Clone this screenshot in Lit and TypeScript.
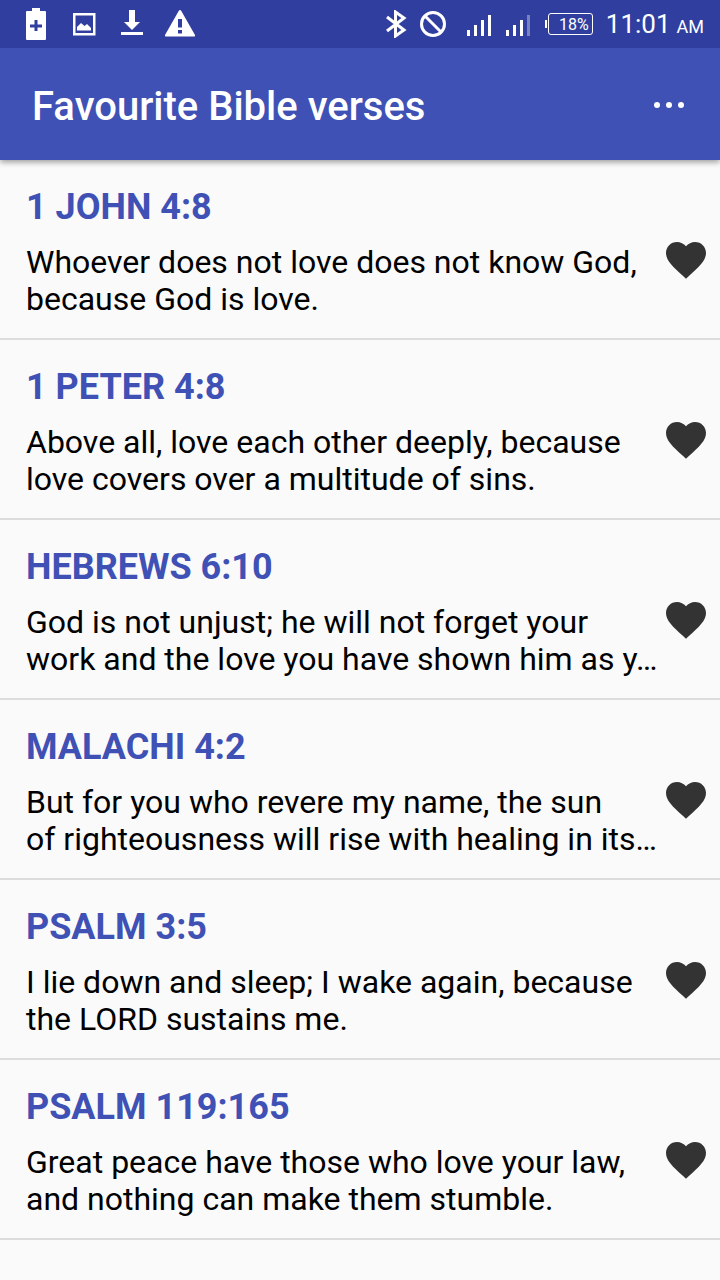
import { LitElement, html, css, svg } from "lit";
import { customElement, property } from "lit/decorators.js";

interface Verse {
  reference: string;
  text: string;
}

const verses: Verse[] = [
  { reference: "1 JOHN 4:8", text: "Whoever does not love does not know God, because God is love." },
  { reference: "1 PETER 4:8", text: "Above all, love each other deeply, because love covers over a multitude of sins." },
  {
    reference: "HEBREWS 6:10",
    text: "God is not unjust; he will not forget your work and the love you have shown him as y…",
  },
  {
    reference: "MALACHI 4:2",
    text: "But for you who revere my name, the sun of\u00a0righteousness will rise with healing in its…",
  },
  { reference: "PSALM 3:5", text: "I lie down and sleep; I wake again, because the LORD sustains me." },
  { reference: "PSALM 119:165", text: "Great peace have those who love your law, and nothing can make them stumble." },
];

@customElement("status-bar")
export class StatusBar extends LitElement {
  static styles = css`
    :host {
      display: flex;
      align-items: center;
      justify-content: space-between;
      height: 48px;
      padding: 0 16px 0 12px;
      background: #303f9f;
      color: #fff;
    }
    .notifications {
      display: grid;
      grid-template-columns: repeat(4, 48px);
      place-items: center;
    }
    .system {
      display: flex;
      align-items: center;
      gap: 13px;
    }
    svg {
      display: block;
      fill: currentColor;
    }
    .radios {
      display: flex;
      gap: 13px;
      margin-right: 7px;
    }
    .signals {
      display: flex;
      gap: 12px;
    }
    .battery {
      display: flex;
      align-items: center;
      gap: 1px;
    }
    .tip {
      width: 2px;
      height: 8px;
      background: currentColor;
    }
    .level {
      box-sizing: border-box;
      width: 45px;
      height: 22px;
      padding-left: 7px;
      border: 1px solid currentColor;
      border-radius: 3px;
      font-size: 16px;
      line-height: 22px;
      text-align: center;
    }
    .clock {
      display: flex;
      align-items: baseline;
      gap: 6px;
      padding-top: 3px;
      font-size: 26px;
      line-height: 30px;
      white-space: nowrap;
    }
    .period {
      font-size: 18px;
    }
  `;

  private signal(weak: boolean) {
    return html`<svg width="27" height="24" viewBox="0 0 27 24" aria-hidden="true">
      <path d="M1 18h3v6H1zM8 13h3v11H8zM15 8h3v16h-3z" />
      <path d="M22 3h3v21h-3z" opacity=${weak ? 0.35 : 1} />
    </svg>`;
  }

  render() {
    return html`
      <div class="notifications">
        <svg width="24" height="32" viewBox="0 0 24 32" aria-hidden="true">
          <path fill-rule="evenodd" d="M3 3h5V0h8v3h5a1 1 0 0 1 1 1v27a1 1 0 0 1-1 1H3a1 1 0 0 1-1-1V4a1 1 0 0 1 1-1zM10.500 12v4.500H6v3h4.500V23h3v-3.500H18v-3h-4.500V12z" />
        </svg>
        <svg width="24" height="24" viewBox="0 0 24 24" aria-hidden="true">
          <path fill-rule="evenodd" d="M1 1h22.500v22.500H1zM3.500 3.500V21H21V3.500z" />
          <path d="M5 18.500V15l4-4 3.500 3 2.500-2 4 4v2.500z" />
        </svg>
        <svg width="24" height="28" viewBox="0 0 24 28" aria-hidden="true">
          <path d="M9 0h6v12h5l-8 8-8-8h5zM1 22h22v3H1z" />
        </svg>
        <svg width="32" height="28" viewBox="0 0 32 28" aria-hidden="true">
          <path fill-rule="evenodd" d="M16 0q.8 0 1.300 1L31 25q.5 1.500-1 1.500H2q-1.500 0-1-1.500L14.700 1q.5-1 1.300-1zM14 9v8.500h4V9zM14 20v3.500h4V20z" />
        </svg>
      </div>
      <div class="system">
        <div class="radios">
          <svg width="22" height="28" viewBox="0 0 22 28" aria-hidden="true">
            <path d="M2 7l17 13-8.500 6V2L19 8 2 21" fill="none" stroke="currentColor" stroke-width="3" />
          </svg>
          <svg width="26" height="28" viewBox="0 0 26 28" aria-hidden="true">
            <circle cx="13" cy="14" r="11.500" fill="none" stroke="currentColor" stroke-width="3" />
            <path d="M5 6l16 16" stroke="currentColor" stroke-width="3" />
          </svg>
        </div>
        <div class="signals">${this.signal(false)}${this.signal(true)}</div>
        <div class="battery"><span class="tip"></span><span class="level">18%</span></div>
        <div class="clock"><span>11:01</span><span class="period">AM</span></div>
      </div>
    `;
  }
}

@customElement("verse-row")
export class VerseRow extends LitElement {
  @property({ attribute: false }) verse!: Verse;

  static styles = css`
    :host {
      display: grid;
      grid-template-columns: minmax(0, 1fr) 44px;
      align-items: center;
      padding: 26px 12px 20px 26px;
      border-bottom: 2px solid #dcdcdc;
    }
    .reference {
      margin: 0 0 16px;
      color: #3f51b5;
      font-size: 36px;
      font-weight: 700;
      line-height: 42px;
    }
    .text {
      margin: 0;
      color: #000;
      font-size: 32px;
      line-height: 37px;
    }
    .favourite {
      padding: 16px 0 0;
      border: 0;
      background: none;
      color: #333;
      cursor: pointer;
    }
    svg {
      display: block;
      fill: currentColor;
    }
  `;

  render() {
    return html`
      <div>
        <h2 class="reference">${this.verse.reference}</h2>
        <p class="text">${this.verse.text}</p>
      </div>
      <button class="favourite" type="button" aria-label="Remove ${this.verse.reference} from favourites">
        <svg width="44" height="48" viewBox="1 0 22 24" aria-hidden="true">
          <path d="M12 21.350l-1.450-1.320C5.400 15.360 2 12.280 2 8.500 2 5.420 4.420 3 7.500 3c1.740 0 3.410.81 4.500 2.090C13.090 3.810 14.760 3 16.500 3 19.580 3 22 5.420 22 8.500c0 3.780-3.400 6.860-8.550 11.540L12 21.350z" />
        </svg>
      </button>
    `;
  }
}

@customElement("app-root")
export class AppRoot extends LitElement {
  static styles = css`
    :host {
      display: block;
      min-height: 100vh;
      background: #fafafa;
      font-family: Roboto, "Liberation Sans", sans-serif;
    }
    .toolbar {
      position: relative;
      display: flex;
      align-items: center;
      justify-content: space-between;
      height: 112px;
      padding: 0 32px;
      background: #3f51b5;
      color: #fff;
      box-shadow: 0 2px 6px rgba(0, 0, 0, 0.4);
      clip-path: inset(0 0 -12px 0);
    }
    .title {
      margin: 0;
      padding-top: 6px;
      font-size: 40px;
      font-weight: 500;
      line-height: 48px;
    }
    .menu {
      padding: 0;
      border: 0;
      background: none;
      color: inherit;
      cursor: pointer;
    }
    .dots {
      display: block;
      fill: currentColor;
    }
    .list {
      margin: 0;
      padding: 0;
      list-style: none;
    }
  `;

  render() {
    return html`
      <status-bar></status-bar>
      <header class="toolbar">
        <h1 class="title">Favourite Bible verses</h1>
        <button class="menu" type="button" aria-label="More options">
          <svg class="dots" width="38" height="48" viewBox="0 0 38 48" aria-hidden="true">
            ${[7, 19, 31].map((x) => svg`<circle cx=${x} cy="25" r="3"></circle>`)}
          </svg>
        </button>
      </header>
      <ul class="list">
        ${verses.map((verse) => html`<li><verse-row .verse=${verse}></verse-row></li>`)}
      </ul>
    `;
  }
}
